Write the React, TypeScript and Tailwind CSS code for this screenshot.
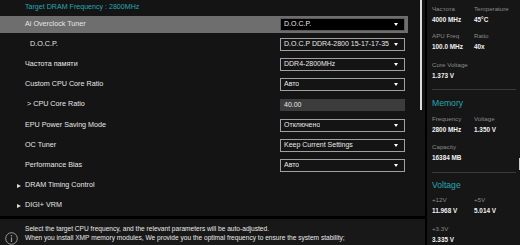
import { ReactNode } from 'react';

const font = { fontFamily: '"Liberation Sans", Arial, sans-serif' };

function Dropdown({ value, active }: { value: string; active?: boolean }) {
  return (
    <div
      className={`w-[125px] h-[13px] flex items-center justify-between pl-[3px] pr-[6px] border ${
        active ? 'bg-black border-[#5a5a5a]' : 'border-[#a0a0a0]'
      }`}
    >
      <span className="text-[7px] text-[#e8e8e8] whitespace-nowrap overflow-hidden">{value}</span>
      <span className="w-0 h-0 border-l-[2.5px] border-r-[2.5px] border-t-[3px] border-l-transparent border-r-transparent border-t-white shrink-0 ml-[2px]" />
    </div>
  );
}

function Row({
  label,
  indent,
  active,
  children,
}: {
  label: ReactNode;
  indent?: boolean;
  active?: boolean;
  children?: ReactNode;
}) {
  return (
    <div className="h-[20.2px] flex items-center">
      <div
        className={`h-[17px] w-[408px] flex items-center justify-between ${active ? 'bg-[#6e6e6e]' : ''}`}
      >
        <span className={`text-[7.2px] text-[#e6e6e6] ${indent ? 'pl-[30px]' : 'pl-[25px]'}`}>{label}</span>
        <div className="pr-[3px]">{children}</div>
      </div>
    </div>
  );
}

function Submenu({ label }: { label: string }) {
  return (
    <div className="h-[20.2px] flex items-center pl-[17px] gap-[4px]">
      <span className="w-0 h-0 border-t-[2.5px] border-b-[2.5px] border-l-[4px] border-t-transparent border-b-transparent border-l-[#dcdcdc]" />
      <span className="text-[7.2px] text-[#e6e6e6]">{label}</span>
    </div>
  );
}

function Stat({ label, value }: { label: string; value: string }) {
  return (
    <div className="w-[42px]">
      <div className="text-[6.2px] text-[#8a8a8a] leading-[10px] whitespace-nowrap">{label}</div>
      <div className="text-[6.4px] text-[#f0f0f0] font-bold leading-[11px] whitespace-nowrap">{value}</div>
    </div>
  );
}

function Heading({ children }: { children: string }) {
  return <div className="text-[8.6px] text-[#27a7b1] leading-[12px]">{children}</div>;
}

export default function App() {
  return (
    <div className="w-[520px] h-[245px] flex bg-[#141414] overflow-hidden" style={font}>
      <div className="w-[425px] flex flex-col">
        <div className="h-[220px] relative">
          <div className="h-[14px] flex items-center pl-[25px] text-[7.1px] text-[#27a7b1]">
            Target DRAM Frequency : 2800MHz
          </div>
          <Row label="Ai Overclock Tuner" active>
            <Dropdown value="D.O.C.P." active />
          </Row>
          <Row label="D.O.C.P." indent>
            <Dropdown value="D.O.C.P DDR4-2800 15-17-17-35" />
          </Row>
          <Row label="Частота памяти">
            <Dropdown value="DDR4-2800MHz" />
          </Row>
          <Row label="Custom CPU Core Ratio">
            <Dropdown value="Авто" />
          </Row>
          <Row label={<span className="pl-[2px]">&gt; CPU Core Ratio</span>}>
            <div className="w-[125px] h-[12px] bg-[#3c3c3c] flex items-center pl-[4px] text-[7px] text-[#e8e8e8]">
              40.00
            </div>
          </Row>
          <Row label="EPU Power Saving Mode">
            <Dropdown value="Отключено" />
          </Row>
          <Row label="OC Tuner">
            <Dropdown value="Keep Current Settings" />
          </Row>
          <Row label="Performance Bias">
            <Dropdown value="Авто" />
          </Row>
          <Submenu label="DRAM Timing Control" />
          <Submenu label="DIGI+ VRM" />
          <div className="absolute left-[420px] top-0 w-[2px] h-[110px] bg-[#dedede]" />
        </div>
        <div className="h-[3px] bg-black" />
        <div className="flex-1 bg-[#181818] flex items-start pt-[5px]">
          <div className="w-[25px] pl-[5px] pt-[8px] shrink-0">
            <svg width="13" height="13" viewBox="0 0 13 13">
              <circle cx="6.5" cy="6.5" r="5.8" fill="none" stroke="#9a9a9a" strokeWidth="1" />
              <circle cx="6.5" cy="3.8" r="0.8" fill="#9a9a9a" />
              <rect x="5.9" y="5.4" width="1.2" height="4.6" fill="#9a9a9a" />
            </svg>
          </div>
          <div className="text-[6.6px] leading-[9px] text-[#e8e8e8] whitespace-nowrap">
            <div>Select the target CPU frequency, and the relevant parameters will be auto-adjusted.</div>
            <div>
              When you install XMP memory modules, We provide you the optimal frequency to ensure the system stability;
            </div>
          </div>
        </div>
      </div>
      <div className="w-[2px] bg-black" />
      <div className="flex-1 bg-[#161616] pl-[5px] pr-[4px] pt-[4px] relative">
        <div className="flex">
          <Stat label="Частота" value="4000 MHz" />
          <Stat label="Temperature" value="45°C" />
        </div>
        <div className="flex mt-[6px]">
          <Stat label="APU Freq" value="100.0 MHz" />
          <Stat label="Ratio" value="40x" />
        </div>
        <div className="flex mt-[8px]">
          <Stat label="Core Voltage" value="1.373 V" />
        </div>
        <div className="h-px bg-[#3a3a3a] mt-[8px]" />
        <div className="mt-[7px]">
          <Heading>Memory</Heading>
        </div>
        <div className="flex mt-[5px]">
          <Stat label="Frequency" value="2800 MHz" />
          <Stat label="Voltage" value="1.350 V" />
        </div>
        <div className="flex mt-[7px]">
          <Stat label="Capacity" value="16384 MB" />
        </div>
        <div className="h-px bg-[#3a3a3a] mt-[9px]" />
        <div className="mt-[6px]">
          <Heading>Voltage</Heading>
        </div>
        <div className="flex mt-[4px]">
          <Stat label="+12V" value="11.968 V" />
          <Stat label="+5V" value="5.014 V" />
        </div>
        <div className="flex mt-[8px]">
          <Stat label="+3.3V" value="3.335 V" />
        </div>
        <div className="absolute right-0 top-[158px] w-[1.5px] h-[12px] bg-[#cfcfcf]" />
      </div>
    </div>
  );
}
